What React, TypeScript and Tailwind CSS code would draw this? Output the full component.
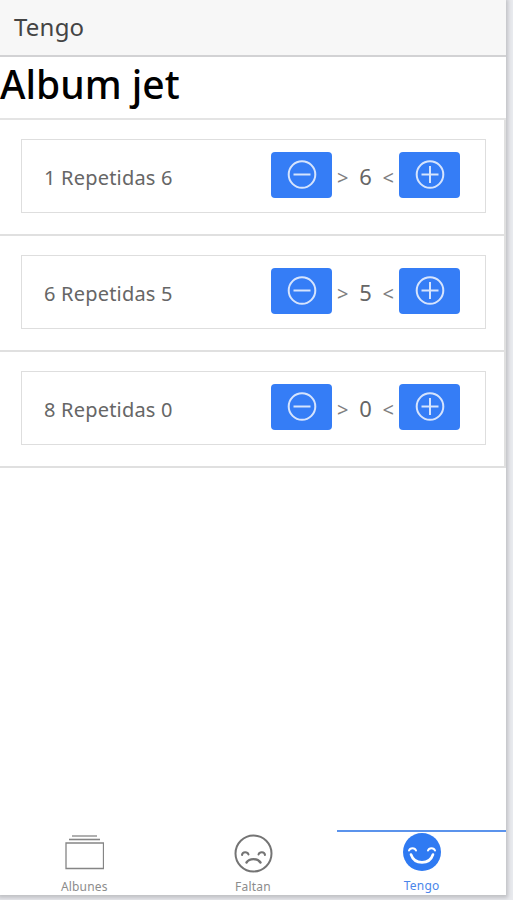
import { useState } from "react";

interface Sticker {
  id: number;
  repeated: number;
}

interface StickerRowProps {
  sticker: Sticker;
  onChange: (id: number, delta: number) => void;
}

const initialStickers: Sticker[] = [
  { id: 1, repeated: 6 },
  { id: 6, repeated: 5 },
  { id: 8, repeated: 0 },
];

function CircleIcon({ plus }: { plus?: boolean }) {
  return (
    <svg width="30" height="30" viewBox="0 0 30 30" fill="none" stroke="#d6e4fd" strokeWidth="2">
      <circle cx="15" cy="14.5" r="13.3" />
      <path d="M6.5 14.5h17" />
      {plus && <path d="M15 6v17" />}
    </svg>
  );
}

function AlbumsIcon() {
  return (
    <svg width="40" height="40" viewBox="0 0 40 40" fill="none" stroke="#858585" strokeWidth="1.3">
      <path d="M8 3h25" />
      <path d="M5 6.5h31" strokeWidth="1.6" />
      <path d="M2 10h37.500v25.500h-37.500z" />
    </svg>
  );
}

function SadIcon() {
  return (
    <svg width="40" height="40" viewBox="0 0 40 40" fill="none" stroke="#747474" strokeWidth="2" strokeLinecap="round">
      <circle cx="20.5" cy="20.5" r="18" />
      <path d="M9 22c.5-3.500 5.500-3.500 6.500-.5M25.500 21.500c1-3 6-3 6.500.5" />
      <path d="M13.500 29.500c3-4.500 11-4.500 14 0" strokeWidth="2.400" />
    </svg>
  );
}

function HappyIcon() {
  return (
    <svg width="40" height="40" viewBox="0 0 40 40" fill="none" stroke="#ffffff" strokeWidth="2" strokeLinecap="round">
      <circle cx="20" cy="19" r="19" fill="#2f7af2" stroke="none" />
      <path d="M7 17.500c1-3 6-3 7 0M26 17.500c1-3 6-3 7 0" />
      <path d="M9 21.500c3.500 10.500 18.500 10.500 22 0" strokeWidth="2.600" />
    </svg>
  );
}

function StickerRow({ sticker, onChange }: StickerRowProps) {
  return (
    <li className="h-[116px] border-b-2 border-[#e0e0e0] pt-[19px] pl-[21px] pr-[18px]">
      <div className="flex h-[74px] items-center border-[1.5px] border-[#dedede] pl-[22px] pr-[25px] text-[#666666]">
        <span className="mt-1 flex-1 text-[20px] tracking-[0.2px]">
          {sticker.id} Repetidas {sticker.repeated}
        </span>
        <button
          className="mb-0.5 flex h-[46px] w-[61px] items-center justify-center rounded-[4px] bg-[#357df6]"
          onClick={() => onChange(sticker.id, -1)}
          aria-label="Quitar"
        >
          <CircleIcon />
        </button>
        <span className="flex w-[67px] items-center justify-between px-[5px] text-[22px]">
          <span className="pt-1 text-[20px] text-[#808080]">&gt;</span>
          <span>{sticker.repeated}</span>
          <span className="pt-1 text-[20px] text-[#808080]">&lt;</span>
        </span>
        <button
          className="mb-0.5 flex h-[46px] w-[61px] items-center justify-center rounded-[4px] bg-[#357df6]"
          onClick={() => onChange(sticker.id, 1)}
          aria-label="Agregar"
        >
          <CircleIcon plus />
        </button>
      </div>
    </li>
  );
}

export default function App() {
  const [stickers, setStickers] = useState(initialStickers);

  const handleChange = (id: number, delta: number) => {
    setStickers(
      stickers.map((s) => (s.id === id ? { ...s, repeated: Math.max(0, s.repeated + delta) } : s))
    );
  };

  return (
    <div className="h-[900px] w-[513px] overflow-hidden bg-[#e9eaee] font-['Noto_Sans',sans-serif]">
      <div className="flex h-[895px] w-[506px] flex-col bg-white shadow-[0_1px_4px_2px_#bfc0c4]">
        <header className="h-[57px] border-b-2 border-[#d2d2d4] bg-[#f7f7f7] pt-2.5 pl-3.5 text-[24px] leading-[34px] tracking-[0.2px] text-[#444444]">
          Tengo
        </header>
        <h1 className="h-[61px] text-[39px] leading-[54px] font-medium text-black">Album jet</h1>

        <div className="flex-1">
          <div className="border-t-2 border-[#e4e4e4]">
            <ul className="border-r-2 border-[#e0e0e0]">
              {stickers.map((sticker) => (
                <StickerRow key={sticker.id} sticker={sticker} onChange={handleChange} />
              ))}
            </ul>
          </div>
        </div>

        {/* Tab bar */}
        <nav className="grid h-[65px] grid-cols-3 text-[12px] leading-[16px] text-[#8c8c8c]">
          <button className="flex flex-col items-center border-t-2 border-transparent pt-px">
            <AlbumsIcon />
            <span className="mt-[6px] tracking-[0.2px]">Albunes</span>
          </button>
          <button className="flex flex-col items-center border-t-2 border-transparent pt-px">
            <SadIcon />
            <span className="mt-[6px] tracking-[0.2px]">Faltan</span>
          </button>
          <button className="flex flex-col items-center border-t-2 border-[#5b93ec] pt-px text-[#4a86ea]">
            <HappyIcon />
            <span className="mt-[5px] tracking-[0.2px]">Tengo</span>
          </button>
        </nav>
      </div>
    </div>
  );
}
